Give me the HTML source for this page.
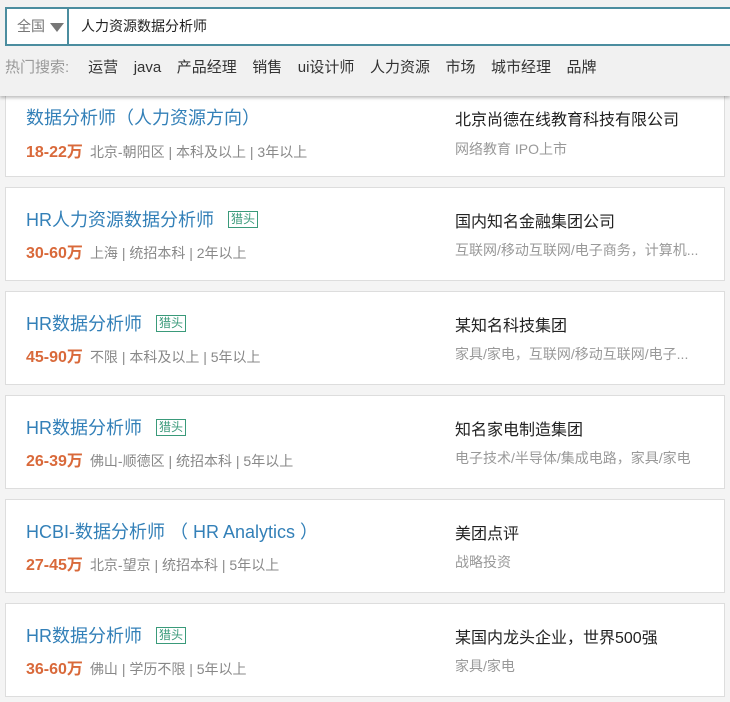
<!DOCTYPE html>
<html><head><meta charset="utf-8"><style>
*{margin:0;padding:0;box-sizing:border-box}
body{width:730px;height:702px;overflow:hidden;background:#f4f4f4;font-family:"Liberation Sans","Noto Sans CJK SC",sans-serif;position:relative}
.hdr{position:absolute;left:0;top:0;width:730px;height:96px;background:#f1f1f1;box-shadow:0 2px 3px rgba(0,0,0,.25);z-index:2}
.sb{position:absolute;left:5px;top:7px;width:740px;height:39px;border:2px solid #4b8d9f;background:#fff}
.city{position:absolute;left:0;top:0;width:62px;height:35px;border-right:2px solid #4b8d9f;color:#777;font-size:14px;line-height:35px;padding-left:10px}
.tri{position:absolute;left:43px;top:14px;width:0;height:0;border-left:7px solid transparent;border-right:7px solid transparent;border-top:9px solid #777}
.q{position:absolute;left:74px;top:0;line-height:35px;font-size:14px;color:#222}
.hot{position:absolute;left:5px;top:56px;font-size:15px;color:#333;white-space:nowrap}
.hot b{font-weight:normal;color:#999;margin-right:19px}
.hot span{margin-right:15.5px}
.card{position:absolute;left:5px;width:720px;height:94px;background:#fff;border:1px solid #ddd}
.t{position:absolute;left:20px;top:18px;font-size:18px;color:#3380b8;white-space:nowrap}
.tag{display:inline-block;font-size:12px;color:#3a9a7a;border:1px solid #3a9a7a;padding:0 2px;line-height:15px;margin-left:14px;vertical-align:3px}
.m{position:absolute;left:20px;top:51px;font-size:14px;color:#888;white-space:nowrap}
.m em{font-style:normal;color:#d9693a;font-size:16px;font-weight:bold;margin-right:7px}
.c{position:absolute;left:449px;top:20px;font-size:16px;color:#222;white-space:nowrap}
.d{position:absolute;left:449px;top:52px;font-size:14px;color:#999;white-space:nowrap}
</style></head><body>
<div class="hdr">
<div class="sb"><div class="city">全国<div class="tri"></div></div><div class="q">人力资源数据分析师</div></div>
<div class="hot"><b>热门搜索:</b><span>运营</span><span>java</span><span>产品经理</span><span>销售</span><span>ui设计师</span><span>人力资源</span><span>市场</span><span>城市经理</span><span>品牌</span></div>
</div>
<div class="card" style="top:83px"><div class="t" style="top:20px">数据分析师（人力资源方向）</div><div class="m" style="top:54px"><em>18-22万</em>北京-朝阳区 | 本科及以上 | 3年以上</div><div class="c" style="top:22px">北京尚德在线教育科技有限公司</div><div class="d" style="top:55px">网络教育 IPO上市</div></div>
<div class="card" style="top:187px"><div class="t">HR人力资源数据分析师<span class="tag">猎头</span></div><div class="m"><em>30-60万</em>上海 | 统招本科 | 2年以上</div><div class="c">国内知名金融集团公司</div><div class="d">互联网/移动互联网/电子商务，计算机...</div></div>
<div class="card" style="top:291px"><div class="t">HR数据分析师<span class="tag">猎头</span></div><div class="m"><em>45-90万</em>不限 | 本科及以上 | 5年以上</div><div class="c">某知名科技集团</div><div class="d">家具/家电，互联网/移动互联网/电子...</div></div>
<div class="card" style="top:395px"><div class="t">HR数据分析师<span class="tag">猎头</span></div><div class="m"><em>26-39万</em>佛山-顺德区 | 统招本科 | 5年以上</div><div class="c">知名家电制造集团</div><div class="d">电子技术/半导体/集成电路，家具/家电</div></div>
<div class="card" style="top:499px"><div class="t">HCBI-数据分析师 （ HR Analytics ）</div><div class="m"><em>27-45万</em>北京-望京 | 统招本科 | 5年以上</div><div class="c">美团点评</div><div class="d">战略投资</div></div>
<div class="card" style="top:603px"><div class="t">HR数据分析师<span class="tag">猎头</span></div><div class="m"><em>36-60万</em>佛山 | 学历不限 | 5年以上</div><div class="c">某国内龙头企业，世界500强</div><div class="d">家具/家电</div></div>
</body></html>
